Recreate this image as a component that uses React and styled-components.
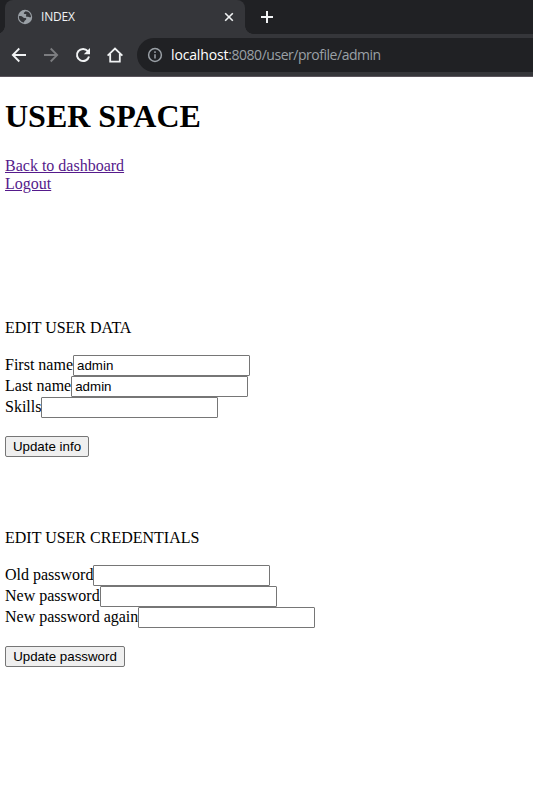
import React from "react";
import styled, { createGlobalStyle } from "styled-components";

const GlobalStyle = createGlobalStyle`
  * { box-sizing: border-box; }
  body { margin: 0; background: #fff; }
`;

const Window = styled.div`
  width: 533px;
  height: 787px;
  overflow: hidden;
  background: #fff;
`;

const TabStrip = styled.div`
  display: flex;
  height: 34px;
  padding-left: 5px;
  background: #202124;
`;

const Tab = styled.div`
  position: relative;
  display: flex;
  align-items: center;
  width: 240px;
  height: 34px;
  padding: 0 11px 0 12px;
  border-radius: 8px 8px 0 0;
  background: #35363a;

  &::before,
  &::after {
    content: "";
    position: absolute;
    bottom: 0;
    width: 8px;
    height: 8px;
  }
  &::before {
    left: -8px;
    background: radial-gradient(circle at 0 0, transparent 7.5px, #35363a 8px);
  }
  &::after {
    right: -8px;
    background: radial-gradient(circle at 100% 0, transparent 7.5px, #35363a 8px);
  }
`;

const TabTitle = styled.span`
  flex: 1;
  margin-left: 8px;
  font: 12px/16px "Open Sans", "Noto Sans", sans-serif;
  letter-spacing: -0.2px;
  color: #f1f3f4;
`;

const NewTab = styled.div`
  display: flex;
  align-items: center;
  margin-left: 14px;
`;

const Toolbar = styled.div`
  display: flex;
  height: 43px;
  padding: 4px 0 0 11px;
  border-bottom: 1px solid #5a545c;
  background: #35363a;
`;

const NavIcons = styled.div`
  display: flex;
  gap: 16px;
  align-items: center;
  height: 34px;
`;

const AddressBar = styled.div`
  display: flex;
  flex: 1;
  align-items: center;
  height: 34px;
  margin-left: 14px;
  padding-left: 10px;
  border-radius: 17px 0 0 17px;
  background: #202124;
`;

const Url = styled.span`
  margin-left: 8px;
  font: 14px/20px "Open Sans", "Noto Sans", sans-serif;
  letter-spacing: -0.47px;
  white-space: nowrap;
  color: #9aa0a6;
`;

const Host = styled.span`
  letter-spacing: -0.15px;
  color: #fff;
`;

const Icon = styled.svg`
  display: block;
  flex: none;
  fill: none;
  stroke: ${(p) => p.$color || "#f1f3f4"};
  stroke-width: ${(p) => p.$weight || 2};
`;

const Page = styled.main`
  padding: 21px 5px 0;
  font: 16px/18px "Liberation Serif", "Times New Roman", serif;
  color: #000;
`;

const Title = styled.h1`
  margin: 0 0 22px;
  font-size: 32px;
  line-height: 37px;
  font-weight: bold;
`;

const Links = styled.nav`
  display: flex;
  flex-direction: column;
  align-items: flex-start;
`;

const PageLink = styled.a`
  color: #551a8b;
  text-decoration: underline;
`;

const Section = styled.form`
  margin: ${(p) => p.$top}px 0 0;
`;

const SectionTitle = styled.p`
  margin: 0 0 18px;
`;

const Field = styled.label`
  display: flex;
  height: 21px;
  line-height: 20px;
`;

const Input = styled.input`
  width: 177px;
  height: 21px;
  margin: 0;
  padding: 1px 3px;
  border: 1px solid #767676;
  border-radius: 1px;
  background: #fff;
  font: 13.333px "Liberation Sans", Arial, sans-serif;
  color: #000;
  outline: none;
`;

const Button = styled.button`
  display: block;
  width: ${(p) => p.$width}px;
  height: 21px;
  margin: 18px 0 0;
  padding: 0;
  border: 1px solid #767676;
  border-radius: 2px;
  background: #efefef;
  font: 13.333px "Liberation Sans", Arial, sans-serif;
  white-space: nowrap;
  color: #000;
`;

function Globe() {
  return (
    <Icon width="16" height="16" viewBox="0 0 16 16" $color="none">
      <circle cx="8" cy="8" r="7.2" fill="#9aa0a6" />
      <path
        d="M1.8 7.2C3.5 6.7 5 7 6 8.2c.8.9 1.6.7 2.600.9.9.2.9 1 .3 1.600-.8.8-1.800 1-1.900 2.900C4 13 1.800 10.800 1.800 7.200zM8.500 2.200c-.4 1-1.600.9-1.700 1.900-.1.900.9 1 1.700.9 1-.1 1 .8.6 1.400-.4.800.2 1.300 1.200 1.300 1.400 0 2 .9 3.700.6C14 4.800 11.800 2.300 8.500 2.200z"
        fill="#35363a"
      />
    </Icon>
  );
}

function Browser() {
  return (
    <header>
      <TabStrip>
        <Tab>
          <Globe />
          <TabTitle>INDEX</TabTitle>
          <Icon width="10" height="10" viewBox="0 0 10 10" $weight={1.6}>
            <path d="M1.2 1.2 8.8 8.8M8.8 1.2 1.2 8.8" />
          </Icon>
        </Tab>
        <NewTab>
          <Icon width="16" height="16" viewBox="0 0 16 16">
            <path d="M8 2v12M2 8h12" />
          </Icon>
        </NewTab>
      </TabStrip>
      <Toolbar>
        <NavIcons>
          <Icon width="16" height="16" viewBox="0 0 16 16" $weight={1.8}>
            <path d="M15 8H2M8.3 1.5 1.8 8l6.5 6.5" />
          </Icon>
          <Icon width="16" height="16" viewBox="0 0 16 16" $color="#7c7d80" $weight={1.8}>
            <path d="M1 8h13M7.7 1.5 14.2 8l-6.5 6.5" />
          </Icon>
          <Icon width="16" height="16" viewBox="0 0 16 16" $weight={2}>
            <path d="M12.8 4.1A6.1 6.1 0 1 0 14 9.5" />
            <path d="M15 1v6.2H8.8z" fill="#f1f3f4" stroke="none" />
          </Icon>
          <Icon width="16" height="16" viewBox="0 0 16 16" $weight={1.8}>
            <path d="M.6 8.7 8 1.5l7.4 7.2M3.2 7v7.6h9.6V7" />
          </Icon>
        </NavIcons>
        <AddressBar>
          <Icon width="16" height="16" viewBox="0 0 16 16" $color="#9aa0a6" $weight={1.5}>
            <circle cx="8" cy="8" r="6.4" />
            <path d="M8 7.2v4.3M8 4.3v1.6" />
          </Icon>
          <Url>
            <Host>localhost</Host>:8080/user/profile/admin
          </Url>
        </AddressBar>
      </Toolbar>
    </header>
  );
}

function TextField({ label, value = "", type = "text" }) {
  return (
    <Field>
      {label}
      <Input type={type} defaultValue={value} />
    </Field>
  );
}

export default function App() {
  return (
    <Window>
      <GlobalStyle />
      <Browser />
      <Page>
        <Title>USER SPACE</Title>
        <Links>
          <PageLink href="#dashboard">Back to dashboard</PageLink>
          <PageLink href="#logout">Logout</PageLink>
        </Links>
        <Section $top={126}>
          <SectionTitle>EDIT USER DATA</SectionTitle>
          <TextField label="First name" value="admin" />
          <TextField label="Last name" value="admin" />
          <TextField label="Skills" />
          <Button type="button" $width={84}>Update info</Button>
        </Section>
        <Section $top={72}>
          <SectionTitle>EDIT USER CREDENTIALS</SectionTitle>
          <TextField label="Old password" type="password" />
          <TextField label="New password" type="password" />
          <TextField label="New password again" type="password" />
          <Button type="button" $width={120}>Update password</Button>
        </Section>
      </Page>
    </Window>
  );
}
